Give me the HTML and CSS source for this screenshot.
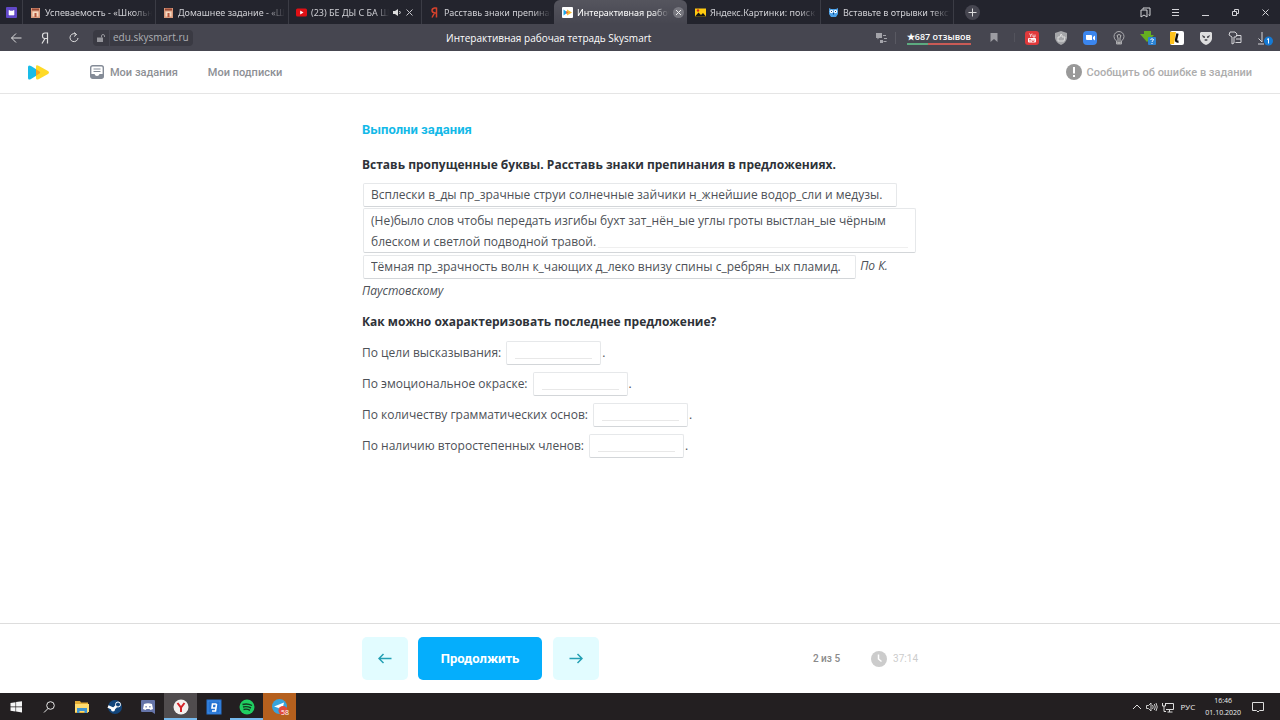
FILE: index.html
```html
<!DOCTYPE html>
<html lang="ru">
<head>
<meta charset="utf-8">
<meta name="viewport" content="width=device-width, initial-scale=1">
<title>Интерактивная рабочая тетрадь Skysmart</title>
<link rel="stylesheet" href="styles.css">
</head>
<body>
<div class="screen">
  <nav class="tabs" aria-label="Вкладки">
    <button class="tab-pinned" aria-label="Закреплённая вкладка"><svg width="11" height="11" viewBox="0 0 11 11"><rect width="11" height="11" rx="1" fill="#6148c8"/><path d="M3 3.2 4 4h3l1-.8V8H3z" fill="#fff" stroke="#fff" stroke-width=".6"/></svg></button>
    <button class="tab"><svg class="fav" viewBox="0 0 11 11"><path d="M1 1h9v10H1z" fill="#d99a7c"/><path d="M2.500 4.500h6v5h-6z" fill="#f5d9c0"/><path d="M2 1.500h7v2H2z" fill="#9b4a36"/><path d="M4.500 6h2v4h-2z" fill="#b3543c"/></svg><span class="tab-title">Успеваемость - «Школьн</span></button>
    <button class="tab"><svg class="fav" viewBox="0 0 11 11"><path d="M1 1h9v10H1z" fill="#d99a7c"/><path d="M2.500 4.500h6v5h-6z" fill="#f5d9c0"/><path d="M2 1.500h7v2H2z" fill="#9b4a36"/><path d="M4.500 6h2v4h-2z" fill="#b3543c"/></svg><span class="tab-title">Домашнее задание - «Шк</span></button>
    <button class="tab"><svg class="fav" viewBox="0 0 11 11"><rect y="1.500" width="11" height="8" rx="1.500" fill="#e01015"/><path d="m4.200 3.500 3.300 2-3.300 2z" fill="#fff"/></svg><span class="tab-title">(23) БЕ ДЫ С БА ШК</span><svg class="snd" viewBox="0 0 9 9"><path d="M0 3h2l3-2v7L2 6H0z" fill="#ddd"/><path d="M6.500 3q1.500 1.500 0 3" stroke="#ddd" fill="none"/></svg><svg class="x" viewBox="0 0 7 7"><path d="m.5.5 6 6m0-6-6 6" stroke="#c4c4c9" fill="none"/></svg></button>
    <button class="tab"><svg class="fav" viewBox="0 0 11 11"><path d="M7.500.500v10M7.500 1H5.500Q3 1.500 3 3.500T6 6h1.500M5.500 6 3 10.500" fill="none" stroke="#d8422c" stroke-width="1.500"/></svg><span class="tab-title">Расставь знаки препинан</span></button>
    <button class="tab active"><svg class="fav" viewBox="0 0 11 11"><rect width="11" height="11" rx="1" fill="#fff"/><path d="m1.500 2.500 4 3-4 3z" fill="#1da5e8"/><path d="m5 2.500 5 3-5 3z" fill="#f9bd35"/><path d="m4 4 2.500 1.500L4 7z" fill="#df6a4a"/></svg><span class="tab-title">Интерактивная рабоча</span><svg class="close" viewBox="0 0 11 11"><circle cx="5.500" cy="5.500" r="5.500" fill="#77777f"/><path d="m3 3 5 5m0-5L3 8" stroke="#eee" fill="none"/></svg></button>
    <button class="tab"><svg class="fav" viewBox="0 0 11 11"><path d="M0 1.500h11v8H0z" fill="#ffcb10"/><path d="m0 9.500 3.500-4L6 8l2-2 3 3.500z" fill="#171717"/><circle cx="3" cy="3.500" r="1.200" fill="#d42b1e"/></svg><span class="tab-title">Яндекс.Картинки: поиск п</span></button>
    <button class="tab"><svg class="fav" viewBox="0 0 11 11"><path d="m1 1 2 1h5l2-1v6L8 10H3L1 7z" fill="#4ba1e8"/><circle cx="3.500" cy="4.500" r="1.700" fill="#fff"/><circle cx="7.500" cy="4.500" r="1.700" fill="#fff"/><path d="M3 4h1v1H3zm4 0h1v1H7zM5 6h1v1.500H5z" fill="#174074"/></svg><span class="tab-title">Вставьте в отрывки текст</span></button>
    <button class="newtab" aria-label="Новая вкладка"><svg width="15" height="15" viewBox="0 0 15 15"><circle cx="7.500" cy="7.500" r="7.500" fill="#464650"/><path d="M3.500 7.500h8m-4-4v8" stroke="#ddd"/></svg></button>
    <div class="window-buttons">
      <button aria-label="Коллекции"><svg viewBox="0 0 11 11"><path d="M3 2.500V1h7v7.500L8.500 7.800M1 3h6v7L4 8 1 10z" fill="none" stroke="#d4d4d8"/></svg></button>
      <button aria-label="Меню"><svg viewBox="0 0 11 11"><path d="M2 2.500h7M2 5.500h7M2 8.500h7" stroke="#d4d4d8"/></svg></button>
      <button aria-label="Свернуть"><svg viewBox="0 0 11 11"><path d="M2 8.500h7" stroke="#d4d4d8"/></svg></button>
      <button aria-label="Окно"><svg viewBox="0 0 11 11"><path d="M2.500 4.500h4v4h-4zM4.500 4.500v-2h4v4h-2" fill="none" stroke="#d4d4d8"/></svg></button>
      <button aria-label="Закрыть"><svg viewBox="0 0 11 11"><path d="m2.500 2.500 6 6m0-6-6 6" stroke="#d4d4d8"/></svg></button>
    </div>
  </nav>

  <div class="toolbar">
    <div class="tool-left">
      <button aria-label="Назад"><svg width="12" height="12" viewBox="0 0 12 12"><path d="M11.500 6H1.500M6 1.500 1.500 6 6 10.500" fill="none" stroke="#dededf"/></svg></button>
      <button aria-label="Яндекс"><svg width="12" height="12" viewBox="0 0 12 12"><path d="M8.500.500v11M8.500 1H6Q3.500 1 3.500 3.800T6 6.500h2.500M6 6.500l-3 5" fill="none" stroke="#dededf" stroke-width="1.200"/></svg></button>
      <button aria-label="Обновить"><svg width="12" height="12" viewBox="0 0 12 12"><path d="M8.500 2.500A4 4 0 1 0 10 6M6 .500l2.500 2-2.500 2" fill="none" stroke="#dededf"/></svg></button>
      <div class="address"><span class="lock"><svg width="10" height="10" viewBox="0 0 10 10"><path d="M1 4.500h6V9H1z" fill="#94949a"/><path d="M5.500 4.500V3a1.500 1.500 0 0 1 3 0v1" fill="none" stroke="#94949a"/></svg></span><span class="host">edu.skysmart.ru</span></div>
    </div>
    <div class="page-title">Интерактивная рабочая тетрадь Skysmart</div>
    <div class="tool-right">
      <button class="translate" aria-label="Перевод"><svg width="12" height="12" viewBox="0 0 12 12"><path d="M1 1h6v5H4L2.500 7.500V6H1zM5 8h3v3H5z" fill="#a4a4aa"/><path d="M8 3.500h3M9 6.500h3M8.500 9.500h3" stroke="#a4a4aa"/></svg></button>
      <div class="reviews"><span>★687 отзывов</span></div>
      <button class="bookmark" aria-label="Закладка"><svg width="8" height="9" viewBox="0 0 8 9"><path d="M.5 0h7v9L4 6 .500 9z" fill="#9c9ca2"/></svg></button>
      <div class="extensions">
        <button aria-label="YouTube"><svg viewBox="0 0 16 16"><rect x="1" y="1" width="14" height="14" rx="3" fill="#df393b"/><path d="m5.500 3.500 1.200 2L8 3.500M6.700 5.500V7M9 4.500V7h2V4.500" fill="none" stroke="#fff" stroke-width=".8"/><rect x="4" y="8" width="8" height="4.500" rx="1" fill="#fff"/><path d="M5 9.300h2M6 9.300v2.500M8 9.500v2h2v-2" stroke="#df393b" stroke-width=".7" fill="none"/></svg></button>
        <button aria-label="Защита"><svg viewBox="0 0 16 16"><path d="m8 1 6 2v5q-1 5-6 7-5-2-6-7V3z" fill="#a5a6a9"/><path d="M5 7h2l1-3 1 1v2h3l-1 4H5z" fill="none" stroke="#ddd"/></svg></button>
        <button aria-label="Zoom"><svg viewBox="0 0 16 16"><rect x="1" y="1" width="14" height="14" rx="4" fill="#3b86ee"/><path d="M4 5h5q1 0 1 1v4H5q-1 0-1-1zm7 2 2-1.500v5L11 9z" fill="#fff"/></svg></button>
        <button aria-label="Подсказки"><svg viewBox="0 0 16 16"><path d="M5.500 11Q3 9 3 6.500a5 5 0 0 1 10 0Q13 9 10.500 11v3h-5z" fill="none" stroke="#aaaaae"/><path d="M6 5.500q2-2 4 0L9 8v5H7V8zM6 13h4" fill="none" stroke="#bbb"/></svg></button>
        <button aria-label="Загрузчик"><svg viewBox="0 0 16 16"><path d="M4 1h7v4h3L7 12 0 4h4z" fill="#65ae20"/><rect x="8" y="7" width="8" height="8" rx="1" fill="#2b83d5"/><path d="M10.500 9.500q1.500-1.500 3 0 0 1-1.500 2v.5m0 1v1" stroke="#fff" fill="none"/></svg></button>
        <button aria-label="Летишопс"><svg viewBox="0 0 16 16"><rect x="1" y="1" width="14" height="14" rx="2" fill="#fff"/><path d="M1 2h6L5 14H1z" fill="#ffc21b"/><path d="M8.500 3.500 7 10q0 2 2.500 1.500" stroke="#111" stroke-width="2.300" fill="none"/></svg></button>
        <button aria-label="Антивирус"><svg viewBox="0 0 16 16"><path d="M3 2h10l1 1v6q-1 4-6 6-5-2-6-6V3z" fill="#dededf"/><path d="m4 5 3 1.500V8L5 7.500zm8 0L9 6.500V8l2-.500zM6 10l2-1 2 1-2 1z" fill="#45454c"/></svg></button>
        <button aria-label="Пароли"><svg viewBox="0 0 16 16"><path d="M3 2h5l2 2-1 3H7v6l-2 1V7L2 5zM9 5.500h5v7H8.500M9 9h5" fill="none" stroke="#d4d4d8"/></svg></button>
        <button aria-label="Загрузки"><svg viewBox="0 0 16 16"><path d="M5 2v10M1.500 8.500 5 12M1 14h6" fill="none" stroke="#d4d4d8"/><circle cx="11.500" cy="11" r="4.500" fill="#147ad5"/><path d="m10 9.500 1.500-1v5" stroke="#fff" fill="none"/></svg></button>
      </div>
    </div>
  </div>

  <header class="header">
    <a class="logo" href="#" aria-label="Skysmart"><svg width="22" height="15" viewBox="0 0 22 15"><path d="M0 2Q0-.500 3 1l8 5q2 1.500 0 3l-8 5q-3 1.500-3-1z" fill="#19bce8"/><path d="M8 1.500Q8-.500 11 1l9 5q2 1.500 0 3l-9 5q-3 1.500-3-1z" fill="#ffda27"/><path d="M8 4.200 11.500 6.400q1.500 1 0 2L8 10.800z" fill="#f7a321"/></svg></a>
    <nav class="menu">
      <a href="#"><svg width="14" height="14" viewBox="0 0 14 14"><rect x=".7" y=".7" width="12.600" height="12.600" rx="2" fill="none" stroke="#848b97" stroke-width="1.400"/><path d="M3.500 4h7M3.500 6.500h7" stroke="#848b97" stroke-width="1.200"/><path d="M1 9h3.500q.500 2 2.500 2t2.500-2H13v4H1z" fill="#848b97"/></svg>Мои задания</a>
      <a href="#">Мои подписки</a>
    </nav>
    <a class="report" href="#"><svg width="16" height="16" viewBox="0 0 16 16"><circle cx="8" cy="8" r="8" fill="#999"/><path d="M8 3v6.500m0 1.500v2" stroke="#fff" stroke-width="2"/></svg>Сообщить об ошибке в задании</a>
  </header>

  <main class="main">
    <div class="column">
      <h1 class="title">Выполни задания</h1>
      <h2 class="task">Вставь пропущенные буквы. Расставь знаки препинания в предложениях.</h2>
      <p class="passage">
        <input class="box first" aria-label="Предложение 1" value="Всплески в_ды пр_зрачные струи солнечные зайчики н_жнейшие водор_сли и медузы.">
        <span class="area"><textarea class="box second" aria-label="Предложение 2" rows="2">(Не)было слов чтобы передать изгибы бухт зат_нён_ые углы гроты выстлан_ые чёрным блеском и светлой подводной травой.</textarea></span>
        <input class="box third" aria-label="Предложение 3" value="Тёмная пр_зрачность волн к_чающих д_леко внизу спины с_ребрян_ых пламид."> <em>По К. Паустовскому</em>
      </p>
      <h2 class="task">Как можно охарактеризовать последнее предложение?</h2>
      <div class="questions">
        <div class="question"><label for="q1">По цели высказывания:</label><span class="answer"><input class="box" id="q1"></span>.</div>
        <div class="question"><label for="q2">По эмоциональное окраске:</label><span class="answer"><input class="box" id="q2"></span>.</div>
        <div class="question"><label for="q3">По количеству грамматических основ:</label><span class="answer"><input class="box" id="q3"></span>.</div>
        <div class="question"><label for="q4">По наличию второстепенных членов:</label><span class="answer"><input class="box" id="q4"></span>.</div>
      </div>
    </div>
  </main>

  <footer class="footer">
    <div class="column footer-row">
      <button class="step" aria-label="Предыдущее"><svg width="14" height="11" viewBox="0 0 14 11"><path d="M13.500 5.500H1M5.500 1 1 5.500 5.500 10" fill="none" stroke="#239fb3" stroke-width="1.500"/></svg></button>
      <button class="continue">Продолжить</button>
      <button class="step" aria-label="Следующее"><svg width="14" height="11" viewBox="0 0 14 11"><path d="M.500 5.500H13M8.500 1 13 5.500 8.500 10" fill="none" stroke="#239fb3" stroke-width="1.500"/></svg></button>
      <span class="progress">2 из 5</span>
      <span class="timer"><svg width="16" height="16" viewBox="0 0 16 16"><circle cx="8" cy="8" r="8" fill="#ccc"/><path d="M7.500 3.500V8l3 2.500" fill="none" stroke="#fff" stroke-width="1.500"/></svg>37:14</span>
    </div>
  </footer>

  <div class="taskbar">
    <div class="apps">
      <button aria-label="Пуск"><svg viewBox="0 0 16 16"><path d="m2.500 4 5-.800v4.300h-5zm5.600-.900L14 2.300v5.200H8.100zM2.500 8.200h5v4.300l-5-.800zm5.600 0H14v5.200l-5.900-.8z" fill="#f5f5f5"/></svg></button>
      <button aria-label="Поиск"><svg viewBox="0 0 16 16"><circle cx="9.500" cy="6.500" r="3.800" fill="none" stroke="#e8e8e8"/><path d="m7 9.500-4 4" stroke="#e8e8e8"/></svg></button>
      <button aria-label="Проводник"><svg viewBox="0 0 16 16"><path d="M1 2h5l1 1.500h7V14H1z" fill="#e3ac35"/><path d="M1 5h14v8H1z" fill="#ffdc70"/><path d="M3 9h10v5h-2.500v-2h-5v2H3z" fill="#3e94d1"/></svg></button>
      <button aria-label="Steam"><svg viewBox="0 0 16 16"><circle cx="8" cy="8" r="7" fill="#12457b"/><path d="M1 7.500 6.500 10l4-4" stroke="#fff" stroke-width="2.500" fill="none"/><circle cx="11" cy="5.500" r="2.500" fill="#12457b" stroke="#fff"/><circle cx="6" cy="10.500" r="2" fill="#fff"/></svg></button>
      <button aria-label="Discord"><svg viewBox="0 0 16 16"><path d="M2 1h12q1 0 1 1v13l-3-2H2q-1 0-1-1V2q0-1 1-1z" fill="#6574a9"/><path d="M4 5q4-1.500 8 0l1 5-2.500 1L9.500 10h-3l-1 1L3 10z" fill="#fff"/><path d="M5.500 7h1.200v1.500H5.500zm3.800 0h1.200v1.500H9.300z" fill="#6574a9"/></svg></button>
      <button class="current" aria-label="Яндекс Браузер"><svg viewBox="0 0 16 16"><circle cx="8" cy="8" r="7.500" fill="#f4f1ef"/><path d="m4.500 4 3.500 4.500L11.500 4M8 8v5" fill="none" stroke="#d52328" stroke-width="2"/></svg></button>
      <button aria-label="Gramota"><svg viewBox="0 0 16 16"><path d="M.5.500h15v15H.500z" fill="#2473d2"/><path d="M2 2h12v12H2z" fill="none" stroke="#559cec" stroke-width=".5"/><path d="M10.500 5H6.500L6 9h4l.5-4L9.500 12H6" fill="none" stroke="#fff" stroke-width="1.600"/></svg></button>
      <button class="open" aria-label="Spotify"><svg viewBox="0 0 16 16"><circle cx="8" cy="8" r="7.500" fill="#20cf62"/><path d="M3.500 5.500q5-1.500 9.500 1M4 8q4-1 8 1M4.500 10.500q3.500-1 6.500.800" fill="none" stroke="#133820" stroke-width="1.400"/></svg></button>
      <button class="alert" aria-label="Telegram"><svg viewBox="0 0 16 16"><circle cx="7.500" cy="7.500" r="7.500" fill="#38a3dc"/><path d="m2 7.500 10-4L10 12 6.500 9z" fill="#fff"/><circle cx="11" cy="11.500" r="4.500" fill="#e24b3c"/></svg><span class="badge">58</span></button>
    </div>
    <div class="tray">
      <svg width="10" height="10" viewBox="0 0 10 10"><path d="m1 7 4-4 4 4" fill="none" stroke="#ddd"/></svg>
      <svg width="12" height="12" viewBox="0 0 12 12"><path d="M.500 4.500h2L5 2v8L2.500 7.500h-2zM6.500 4q1.500 2 0 4M8.300 3q2 3 0 6M10 2q2.500 4 0 8" fill="none" stroke="#ddd" stroke-width=".9"/></svg>
      <svg width="12" height="12" viewBox="0 0 12 12"><path d="M3 2.500h8.500v6H4M7.500 8.500V11m-2 0h5M.500 2v3h3V2M2 5v5.500h2" fill="none" stroke="#ddd"/></svg>
      <span class="lang">РУС</span>
      <span class="clock"><span>16:46</span><span>01.10.2020</span></span>
      <svg class="notes" width="12" height="12" viewBox="0 0 12 12"><path d="M.500 1.500h11v8h-4L6 11 4.500 9.500h-4z" fill="none" stroke="#ddd"/></svg>
    </div>
  </div>
</div>
</body>
</html>
```
FILE: styles.css
```css
* { box-sizing: border-box; }
body { margin: 0; font-family: "Open Sans", "Noto Sans", sans-serif; background: #fff; color: #4d5157; }
button { border: 0; padding: 0; background: none; font: inherit; color: inherit; display: flex; align-items: center; justify-content: center; }
a { color: inherit; text-decoration: none; }
svg { display: block; flex: none; }
h1, h2, p { margin: 0; }
.screen { min-height: 100vh; display: flex; flex-direction: column; }

.tabs { display: flex; height: 24px; background: #23242d; color: #d0d0d5; font-family: "Noto Sans", sans-serif; font-size: 9px; }
.tab-pinned { width: 22px; }
.tab { flex: 0 1 133px; min-width: 0; padding: 0 3px 0 7px; gap: 4px; border-left: 1px solid #3b3c45; justify-content: flex-start; }
.tab.active { background: linear-gradient(#55555e, #464650); border-color: transparent; border-radius: 6px 6px 0 0; color: #fff; }
.tab.active + .tab { border-color: transparent; }
.fav { width: 11px; height: 11px; }
.tab-title { flex: 1; min-width: 0; overflow: hidden; white-space: nowrap; text-align: left; mask-image: linear-gradient(90deg, #000 82%, transparent); }
.snd { width: 9px; height: 9px; }
.x { width: 7px; height: 7px; margin-right: 5px; }
.close { width: 11px; height: 11px; }
.newtab { width: 38px; border-left: 1px solid #3b3c45; }
.window-buttons { display: flex; margin-left: auto; }
.window-buttons button { width: 30px; }
.window-buttons svg { width: 11px; height: 11px; }

.toolbar { height: 27px; display: flex; align-items: center; background: #464650; color: #fff; font-size: 10px; }
.tool-left { display: flex; align-items: center; padding-left: 10px; gap: 17px; }
.address { display: flex; align-items: center; gap: 1px; color: #aeb0b5; margin-left: -4px; }
.lock { width: 16px; height: 16px; display: grid; place-items: center; background: #3a3a43; border-radius: 4px 0 0 4px; }
.host { height: 16px; line-height: 15px; padding: 0 4px 0 3px; background: #3a3a43; border-radius: 0 4px 4px 0; font-size: 10px; }
.page-title { flex: 1; padding-left: 30px; text-align: center; white-space: nowrap; }
.tool-right { display: flex; align-items: center; justify-content: flex-end; }
.translate { padding-right: 8px; border-right: 1px solid #595962; margin-right: 11px; }
.reviews { font-size: 9px; font-weight: 600; line-height: 13px; border-bottom: 2px solid; border-image: linear-gradient(90deg, #5dab80 33%, #c95b56 33%) 1; white-space: nowrap; }
.bookmark { padding: 0 16px; border-right: 1px solid #53535c; margin: 0 2px 0 3px; }
.extensions { display: flex; }
.extensions button { width: 29px; }
.extensions button:last-child { width: 31px; }
.extensions svg { width: 16px; height: 16px; }

.header { height: 43px; display: flex; align-items: center; padding: 0 28px; border-bottom: 1px solid #e5e5e5; font: 500 11px "Roboto", sans-serif; color: #8d9095; }
.menu { display: flex; gap: 30px; margin-left: 40px; }
.menu a, .report { display: flex; align-items: center; gap: 6px; }
.report { margin-left: auto; color: #adadad; gap: 5px; }

.main { flex: 1; padding-top: 26px; font-size: 12px; }
.column { width: 100%; max-width: 556px; margin: 0 auto; }
.title { font: 700 13px/20px "Roboto", sans-serif; color: #13b9e8; }
.task { font-size: 12px; line-height: 20px; font-weight: 700; color: #2e3238; margin-top: 15px; }
.passage { margin-top: 7px; line-height: 24px; }
.box { font: inherit; color: inherit; height: 24px; padding: 0 7px; margin: 0 1px; border: 1px solid #e6e8ea; border-bottom-color: #d3d6d9; border-radius: 2px; background: #fff; vertical-align: middle; outline: 0; }
.first { width: 534px; }
.area { display: grid; margin: 1px 0; }
.area .second { grid-area: 1 / 1; width: 553px; height: 45px; padding: 1px 7px; line-height: 21px; resize: none; overflow: hidden; }
.area::after { content: ""; grid-area: 1 / 1; z-index: 1; align-self: end; height: 1px; margin: 0 10px 5px 236px; background: #efefef; pointer-events: none; }
.third { width: 493px; }
.passage + .task { margin-top: 9px; }
.questions { display: grid; gap: 7px; margin-top: 9px; }
.question { display: flex; align-items: center; line-height: 24px; }
.answer { display: grid; margin: 0 0 0 4px; }
.answer .box { width: 95px; grid-area: 1 / 1; }
.answer::after { content: ""; grid-area: 1 / 1; z-index: 1; align-self: end; height: 1px; margin: 0 10px 6px; background: #e8e8e8; pointer-events: none; }

.footer { height: 70px; border-top: 1px solid #ddd; display: flex; align-items: center; font-family: "Roboto", sans-serif; }
.footer-row { display: flex; align-items: center; }
.step { width: 46px; height: 43px; border-radius: 5px; background: #e2fcff; }
.continue { width: 124px; height: 43px; margin: 0 11px 0 10px; border-radius: 5px; background: #05aefc; color: #fff; font-size: 13px; font-weight: 700; }
.progress { margin-left: auto; font-size: 10px; font-weight: 500; color: #8a8a8a; }
.timer { display: flex; align-items: center; gap: 6px; margin-left: 31px; font-size: 10px; color: #ccc; }

.taskbar { height: 27px; display: flex; justify-content: space-between; background: #231f21; color: #eee; font-size: 9px; }
.apps { display: flex; }
.apps button { width: 33px; position: relative; border-bottom: 2px solid transparent; border-top: 2px solid transparent; }
.apps button:first-child { width: 32px; }
.apps svg { width: 16px; height: 16px; }
.apps .current { background: #504c4e; border-color: #504c4e #504c4e #76b9ed; }
.apps .open { border-bottom-color: #76b9ed; }
.apps .alert { background: #b5601e; border-color: #b5601e; }
.badge { position: absolute; right: 7px; bottom: 1px; font-size: 7px; line-height: 8px; color: #fff; }
.tray { display: flex; align-items: center; gap: 4px; padding-right: 16px; }
.lang { margin: 0 2px 0 3px; font-size: 8px; }
.clock { display: grid; line-height: 12px; text-align: center; font-size: 7px; margin-left: 4px; }
.notes { margin-left: 7px; }
```
